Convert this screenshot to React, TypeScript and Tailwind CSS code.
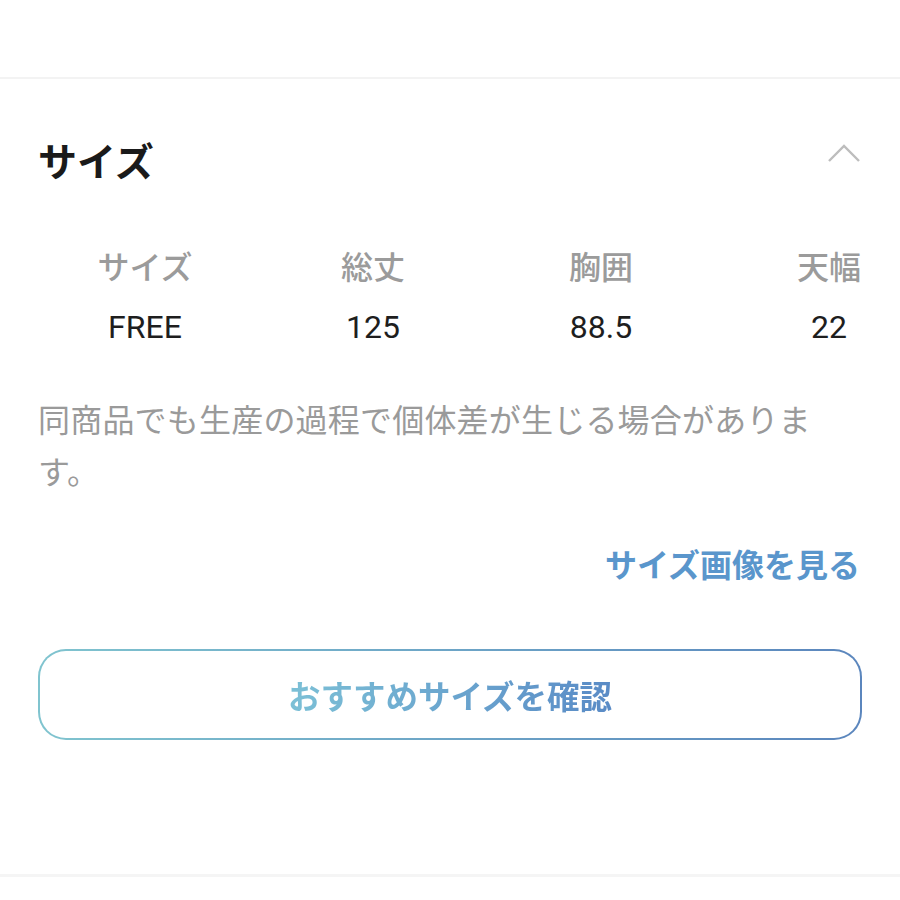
import React from "react";

const jp = { fontFamily: '"Noto Sans CJK JP", "Noto Sans", sans-serif' };
const num = { fontFamily: 'Roboto, "Noto Sans CJK JP", sans-serif' };

export default function App() {
  const cols = [
    { h: "サイズ", v: "FREE" },
    { h: "総丈", v: "125" },
    { h: "胸囲", v: "88.5" },
    { h: "天幅", v: "22" },
  ];
  return (
    <div className="w-[900px] h-[900px] bg-white overflow-hidden" style={jp}>
      <div className="h-[77px]" />
      <div className="h-[2px] bg-[#f3f3f3]" />
      <div className="px-[38px]">
        <div className="flex items-center justify-between h-[162px] pt-[42px] pb-[42px]">
          <div className="text-[39px] font-bold text-[#1a1a1a] leading-none -mt-[2px]">サイズ</div>
          <svg width="34" height="20" viewBox="0 0 34 20" className="mr-[1px] -mt-[14px]">
            <path d="M2 18 L17 3 L32 18" fill="none" stroke="#bdbdbd" strokeWidth="2.4" />
          </svg>
        </div>
      </div>
      <div className="flex ml-[31px] w-[912px] mt-[4px]">
        {cols.map((c) => (
          <div key={c.h} className="w-[228px] flex flex-col items-center">
            <div className="text-[32px] leading-[40px] text-[#9b9b9b] font-medium">{c.h}</div>
            <div className="text-[32px] leading-[40px] text-[#1e1e1e] mt-[22px]" style={num}>{c.v}</div>
          </div>
        ))}
      </div>
      <div className="px-[38px]">
        <p className="mt-[45px] text-[32px] leading-[52px] text-[#9a9a9a] w-[790px] tracking-[0.2px]">
          同商品でも生産の過程で個体差が生じる場合があります。
        </p>
        <div className="flex justify-end mt-[47px]">
          <span className="text-[32px] leading-[40px] font-bold text-[#5a96cc] mr-[2px]">サイズ画像を見る</span>
        </div>
        <div className="mt-[66px] rounded-[28px] p-[2px] bg-gradient-to-r from-[#80c4cf] to-[#5b86bd]">
          <div className="h-[87px] rounded-[26px] bg-white flex items-center justify-center">
            <span className="text-[32.5px] font-bold leading-[40px] bg-gradient-to-r from-[#7cc0d6] to-[#5a8bc6] bg-clip-text text-transparent">
              おすすめサイズを確認
            </span>
          </div>
        </div>
      </div>
      <div className="h-[134px]" />
      <div className="h-[3px] bg-[#f5f5f5]" />
    </div>
  );
}
